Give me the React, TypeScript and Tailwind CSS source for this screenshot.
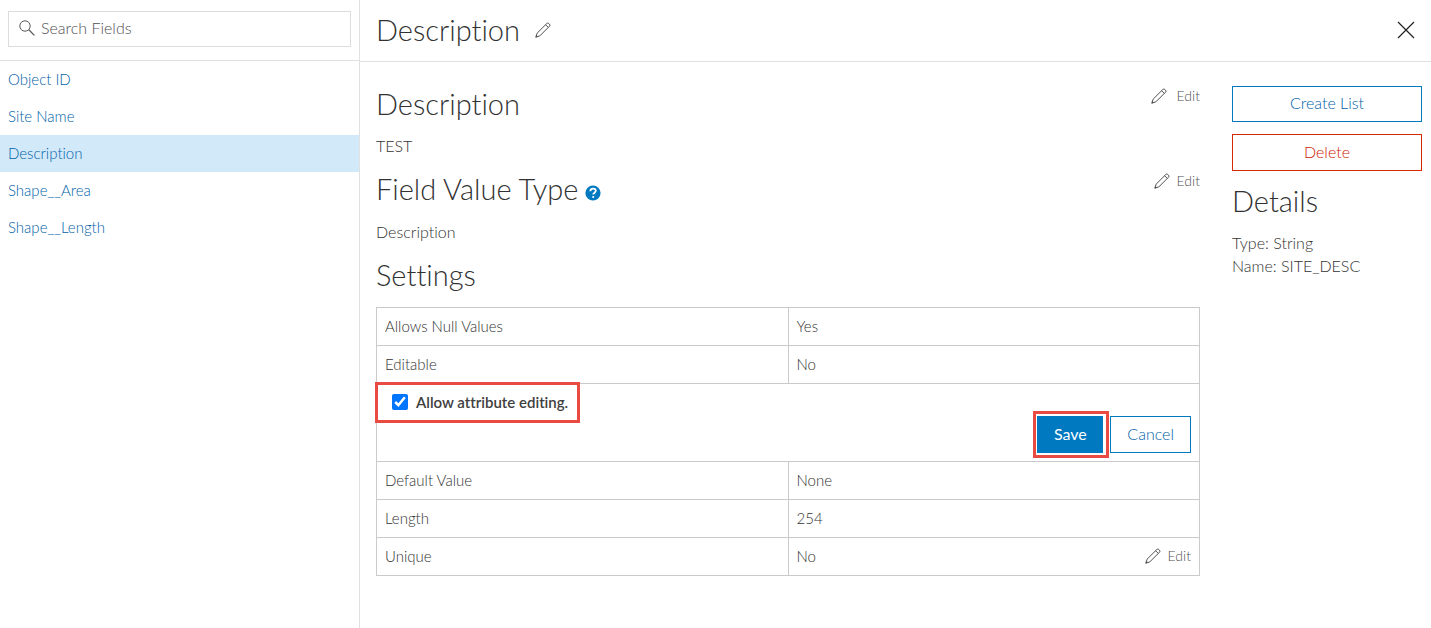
import { useState } from "react";

interface EditButtonProps {
  label: string;
  wide?: boolean;
}

interface Setting {
  name: string;
  value: string;
  action?: string;
}

const FIELDS = [
  "Object ID",
  "Site Name",
  "Description",
  "Shape__Area",
  "Shape__Length",
];

const SETTINGS_TOP: Setting[] = [
  { name: "Allows Null Values", value: "Yes" },
  { name: "Editable", value: "No" },
];

const SETTINGS_BOTTOM: Setting[] = [
  { name: "Default Value", value: "None" },
  { name: "Length", value: "254" },
  { name: "Unique", value: "No", action: "Edit unique" },
];

function PencilIcon() {
  return (
    <svg
      className="size-4 shrink-0"
      viewBox="0 0 16 16"
      fill="none"
      stroke="currentColor"
      aria-hidden="true"
    >
      <path d="M.8 15.2 2.1 11.2 11.8 1.5Q12.8.5 13.8 1.5L14.5 2.2Q15.5 3.2 14.5 4.2L4.8 13.9ZM10.6 2.7 13.3 5.4" />
      <path d="M.6 15.4 1.4 13 3 14.6Z" fill="currentColor" stroke="none" />
    </svg>
  );
}

function EditButton({ label, wide }: EditButtonProps) {
  return (
    <button
      type="button"
      aria-label={label}
      className={`flex items-center text-sm leading-5 text-[#505050] ${wide ? "gap-2.5" : "gap-[7px]"}`}
    >
      <PencilIcon />
      Edit
    </button>
  );
}

function SettingRow({ name, value, action }: Setting) {
  return (
    <tr className="h-[38px]">
      <th scope="row" className="w-1/2 border border-[#cacaca] px-2 pb-0.5 text-left font-light">
        {name}
      </th>
      <td className="border border-[#cacaca] px-2 pb-0.5">
        <div className="flex items-center justify-between">
          {value}
          {action && <EditButton label={action} />}
        </div>
      </td>
    </tr>
  );
}

export default function App() {
  const [selected, setSelected] = useState("Description");
  const [search, setSearch] = useState("");
  const [editable, setEditable] = useState(true);

  const fields = FIELDS.filter((f) =>
    f.toLowerCase().includes(search.toLowerCase()),
  );

  return (
    <div className="flex min-h-screen bg-white font-['Lato','Liberation_Sans',sans-serif] font-light text-[#323232] [font-variant-ligatures:none]">
      {/* Field list */}
      <aside className="w-[360px] shrink-0 border-r border-[#e0e0e0]">
        <div className="border-b border-[#e0e0e0] px-2 pt-[11px] pb-[13px]">
          <label className="flex h-9 items-center gap-1.5 border border-[#dcdcdc] px-2.5 pb-0.5">
            <svg
              className="size-4 shrink-0"
              viewBox="0 0 16 16"
              fill="none"
              stroke="#5a5a5a"
              aria-hidden="true"
            >
              <circle cx="6" cy="6" r="5.2" />
              <path d="m9.8 9.8 5.6 5.6" strokeWidth="1.3" />
            </svg>
            <input
              type="search"
              aria-label="Search Fields"
              placeholder="Search Fields"
              value={search}
              onChange={(e) => setSearch(e.target.value)}
              className="min-w-0 flex-1 text-base leading-6 outline-none placeholder:text-[#505050]"
            />
          </label>
        </div>
        <nav>
          {fields.map((field) => (
            <button
              key={field}
              type="button"
              onClick={() => setSelected(field)}
              className={`block h-[37px] w-full px-2 pb-0.5 text-left text-[15px] leading-5 text-[#0062a8] ${field === selected ? "bg-[#d2e9f9]" : ""}`}
            >
              {field}
            </button>
          ))}
        </nav>
      </aside>

      <div className="min-w-0 flex-1">
        {/* Header */}
        <header className="flex h-[62px] items-center justify-between border-b border-[#e0e0e0] px-4 pb-0.5">
          <div className="flex items-center gap-[15px]">
            <h1 className="text-[29px] leading-9">{selected}</h1>
            <button type="button" aria-label="Edit name" className="text-[#505050]">
              <PencilIcon />
            </button>
          </div>
          <button type="button" aria-label="Close">
            <svg
              className="size-[18px]"
              viewBox="0 0 18 18"
              stroke="#222"
              strokeWidth="1.2"
              aria-hidden="true"
            >
              <path d="m1 1 16 16M17 1 1 17" />
            </svg>
          </button>
        </header>

        <div className="flex gap-8 pt-6 pr-[9px] pl-4">
          <main className="min-w-0 flex-1">
            <section className="flex items-start justify-between">
              <div>
                <h2 className="text-[29px] leading-9">Description</h2>
                <p className="mt-3 text-base leading-6">TEST</p>
              </div>
              <EditButton label="Edit description" wide />
            </section>

            <section className="mt-[13px] flex items-start justify-between">
              <div>
                <h2 className="flex items-center gap-[7px] text-[29px] leading-9">
                  Field Value Type
                  <svg className="mt-2 size-4" viewBox="0 0 16 16" aria-label="Help" role="img">
                    <circle cx="8" cy="8" r="7.6" fill="#0079c1" />
                    <path
                      d="M5.3 6.2C5.4 4.4 6.6 3.6 8.1 3.6s2.7.9 2.7 2.2c0 1.9-2.6 1.8-2.6 3.8"
                      fill="none"
                      stroke="#fff"
                      strokeWidth="1.8"
                    />
                    <circle cx="8.2" cy="12" r="1.1" fill="#fff" />
                  </svg>
                </h2>
                <p className="mt-[13px] text-base leading-6">Description</p>
              </div>
              <EditButton label="Edit field value type" />
            </section>

            <h2 className="mt-[13px] text-[29px] leading-9">Settings</h2>
            <table className="mt-3.5 w-full table-fixed border-collapse text-[15px] leading-5">
              <tbody>
                {SETTINGS_TOP.map((s) => (
                  <SettingRow key={s.name} {...s} />
                ))}
                <tr className="h-[78px]">
                  <td colSpan={2} className="border border-[#cacaca] pr-2 align-top">
                    <label className="mt-px ml-px flex h-[35px] w-fit items-center gap-2 pr-[9px] pb-0.5 pl-3.5 text-[15px] font-semibold text-[#404040] outline-3 outline-[#e94b43]">
                      <input
                        type="checkbox"
                        checked={editable}
                        onChange={(e) => setEditable(e.target.checked)}
                        className="size-4"
                      />
                      Allow attribute editing.
                    </label>
                    <div className="-mt-[9px] flex items-center justify-end gap-px text-base leading-6">
                      <span className="border-3 border-[#e94b43] py-0.5 pr-[3px] pl-px">
                        <button type="button" className="block h-[37px] w-[66px] bg-[#0079c1] pb-0.5 font-normal text-white">
                          Save
                        </button>
                      </span>
                      <button type="button" className="h-[37px] border border-[#0079c1] px-4 pb-0.5 text-[#0062a8]">
                        Cancel
                      </button>
                    </div>
                  </td>
                </tr>
                {SETTINGS_BOTTOM.map((s) => (
                  <SettingRow key={s.name} {...s} />
                ))}
              </tbody>
            </table>
          </main>

          {/* Actions and details */}
          <aside className="w-[190px] shrink-0">
            <button
              type="button"
              className="block h-9 w-full border border-[#0079c1] pb-0.5 text-base text-[#0062a8]"
            >
              Create List
            </button>
            <button
              type="button"
              className="mt-3 block h-[37px] w-full border border-[#d82800] pb-0.5 text-base text-[#cc1800]"
            >
              Delete
            </button>
            <h2 className="mt-3 text-[29px] leading-9">Details</h2>
            <p className="mt-3 text-base leading-[23px]">Type: String</p>
            <p className="text-base leading-[23px]">Name: SITE_DESC</p>
          </aside>
        </div>
      </div>
    </div>
  );
}
